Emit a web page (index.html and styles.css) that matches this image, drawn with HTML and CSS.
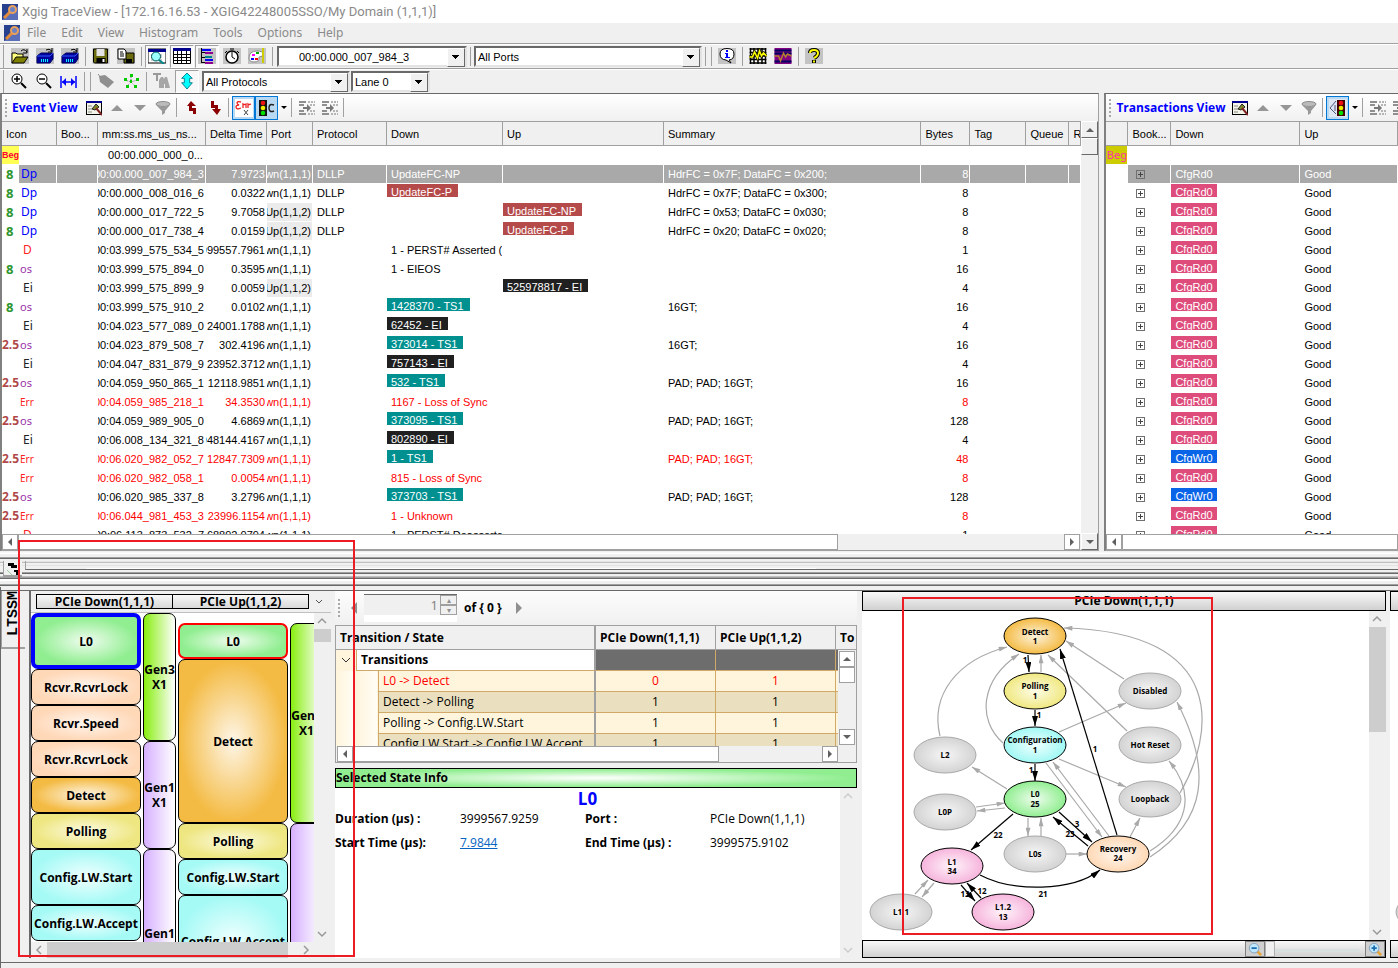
FILE: index.html
```html
<!DOCTYPE html>
<html lang="en">
<head>
  <meta charset="UTF-8">
  <meta name="viewport" content="width=device-width, initial-scale=1.0">
  <title>Xgig TraceView</title>
  <link rel="stylesheet" href="styles.css">
</head>
<body>
  <!-- Icon sprites -->
  <svg class="sprites" aria-hidden="true">
    <symbol id="i-app" viewBox="0 0 16 16"><rect width="16" height="16" fill="#27418f"/><path d="M0 16L16 2V16Z" fill="#5a6fb8"/><path d="M2 14L8 8" stroke="#e08a3c" stroke-width="3"/><circle cx="10.500" cy="5.500" r="3.500" fill="#6c82c4" stroke="#e8a05a" stroke-width="2"/></symbol>
    <symbol id="i-open" viewBox="0 0 18 16"><rect width="18" height="16" fill="#c3c3c3"/><path d="M1 15V5h4l1 1h6v3" fill="#ffff80" stroke="#000"/><path d="M1 15l4-6h12l-4 6Z" fill="#808000" stroke="#000"/><path d="M10 3q3-3 6 1M16 1v4h-4" fill="none" stroke="#000"/></symbol>
    <symbol id="i-dev" viewBox="0 0 18 16"><rect width="18" height="16" fill="#c3c3c3"/><path d="M1 8l4-3h12v6l-3 4H1Z" fill="#00009c" stroke="#000060"/><path d="M1 8h13l3-3" fill="none" stroke="#2a5aff"/><path d="M5 12.500h8" stroke="#0ff" stroke-width="3" stroke-dasharray="1 1"/><path d="M10 2q3-2 6 1M16 0v4h-4" fill="none" stroke="#000"/></symbol>
    <symbol id="i-save" viewBox="0 0 17 16"><rect width="17" height="16" fill="#c3c3c3"/><path d="M1 1h14v14H2l-1-1Z" fill="#6b6b10" stroke="#000"/><path d="M4 1h8v7H4Z" fill="#e4e4e4"/><path d="M4 10h9v5H4Z" fill="#000"/><path d="M10 11h2v3h-2Z" fill="#fff"/></symbol>
    <symbol id="i-saveas" viewBox="0 0 18 16"><rect width="18" height="16" fill="#c3c3c3"/><path d="M7 5h10v10H7Z" fill="#6b6b10" stroke="#000"/><path d="M9 11h6v4H9Z" fill="#000"/><path d="M1 1h6l2 2v8H1Z" fill="#fff" stroke="#000"/><path d="M3 4h3M3 6h4M3 8h4" stroke="#000"/></symbol>
    <symbol id="i-find" viewBox="0 0 18 16"><path d="M0 1h18v14H0Z" fill="#fff" stroke="#000"/><path d="M0 1h18v3H0Z" fill="#000090"/><path d="M3 7h12M3 9h12M3 12h12" stroke="#999" stroke-dasharray="2 1"/><circle cx="8" cy="8.500" r="4.500" fill="#9ff" stroke="#055"/><path d="M11 12l5 4" stroke="#088" stroke-width="2"/></symbol>
    <symbol id="i-grid" viewBox="0 0 18 16"><path d="M.5.5h17v15H.5Z" fill="#fff" stroke="#000"/><path d="M0 0h18v3H0Z" fill="#00008b"/><path d="M0 6.500h18M0 9.500h18M0 12.500h18M4.500 3v13M8.500 3v13M13.500 3v13" stroke="#000"/></symbol>
    <symbol id="i-tree" viewBox="0 0 18 16"><rect width="18" height="16" fill="#c3c3c3"/><path d="M3.500 0v15M4 4.500h3M4 9.500h3M4 14.500h3" stroke="#000" fill="none"/><path d="M4 2h9M7 12h8" stroke="#00f" stroke-width="2"/><path d="M7 5h8M7 15h8" stroke="#900090" stroke-width="2"/><path d="M7 9h7" stroke="#088" stroke-width="2"/></symbol>
    <symbol id="i-clock" viewBox="0 0 18 16"><rect width="18" height="16" fill="#c3c3c3"/><circle cx="9" cy="9" r="6" fill="#fff" stroke="#000" stroke-width="1.500"/><path d="M9 9V4M9 9l3 2M7 1h4M4 3L2 5M14 3l2 2" stroke="#000"/></symbol>
    <symbol id="i-paint" viewBox="0 0 18 16"><rect width="18" height="16" fill="#c3c3c3"/><path d="M1 10q0-7 8-7 6 0 6 3t-4 3q1 5-5 5-5 0-5-4" fill="#fff" stroke="#888"/><path d="M4 6h3v2H4Z" fill="#f0f"/><path d="M3 10h3v2H3Z" fill="#00f"/><path d="M8 4h3v2H8Z" fill="#0a0"/><path d="M7 10h3v2H7Z" fill="#f00"/><path d="M15 0v15" stroke="#cc0" stroke-width="2"/></symbol>
    <symbol id="i-info" viewBox="0 0 18 16"><rect width="18" height="16" fill="#c3c3c3"/><path d="M9 .5q7 0 7 5.500t-5 6l2 3-5-3Q2 11.500 2 6T9 .5" fill="#fff" stroke="#000"/><path d="M8 2h2v2H8ZM7 5h3v4h2v1H7V9h1V6H7Z" fill="#00f"/></symbol>
    <symbol id="i-wave" viewBox="0 0 17 16"><rect width="17" height="16" fill="#fff"/><path d="M0 1h17M0 4.500h17M0 8h17M0 11.500h17M0 15h17M1 0v16M4.500 0v16M8.500 0v16M12.500 0v16M16 0v16" stroke="#000" stroke-width="1.500"/><path d="M0 9h3l2-5 3 6 2-7 2 5 2-3 3 3" fill="none" stroke="#220" stroke-width="3"/><path d="M0 9h3l2-5 3 6 2-7 2 5 2-3 3 3" fill="none" stroke="#ff0" stroke-width="1.500"/></symbol>
    <symbol id="i-wave2" viewBox="0 0 17 16"><rect width="17" height="16" fill="#800080"/><path d="M0 2.500h17M0 5.500h17M0 13.500h17" stroke="#000060" stroke-width="2"/><path d="M0 8h4l2 5 3-8 2 4 2-3 4 2" fill="none" stroke="#b08030" stroke-width="1.500"/></symbol>
    <symbol id="i-help" viewBox="0 0 18 16"><rect width="18" height="16" fill="#c3c3c3"/><path d="M5 5q0-3 4-3t4 3-4 5M9 12v3" fill="none" stroke="#000" stroke-width="4"/><path d="M5 5q0-3 4-3t4 3-4 5M9 12.500v2" fill="none" stroke="#ff0" stroke-width="2"/></symbol>
    <symbol id="i-zin" viewBox="0 0 18 16"><circle cx="7" cy="6" r="5" fill="#fff" stroke="#000"/><path d="M4 6h6M7 3v6" stroke="#000" stroke-width="1.500"/><path d="M11 10l5 5" stroke="#000" stroke-width="2"/></symbol>
    <symbol id="i-zout" viewBox="0 0 18 16"><circle cx="7" cy="6" r="5" fill="#fff" stroke="#000"/><path d="M4 6h6" stroke="#000" stroke-width="1.500"/><path d="M11 10l5 5" stroke="#000" stroke-width="2"/></symbol>
    <symbol id="i-fit" viewBox="0 0 18 16"><path d="M1 3v12M16 3v12M2 9h13" stroke="#00f" stroke-width="1.500"/><path d="M2 9l4-4v8ZM15 9l-4-4v8Z" fill="#00f"/></symbol>
    <symbol id="i-tag" viewBox="0 0 18 16"><path d="M2 3l6-1 9 7-6 6-8-6Z" fill="#8f8f8f"/><path d="M1 1l4 5" stroke="#8f8f8f"/></symbol>
    <symbol id="i-star" viewBox="0 0 18 16"><path d="M9 2v6M3 7l6 2 6-2M5 13l4-4 4 4" stroke="#777" stroke-dasharray="1 1" fill="none"/><path d="M8 1h3v3H8ZM2 5h3v3H2ZM14 5h3v3h-3ZM8 7h2v3H8ZM4 12h3v3H4ZM12 12h3v3h-3Z" fill="#0c0"/></symbol>
    <symbol id="i-bino" viewBox="0 0 18 16"><path d="M0 1h8M4 1v7" stroke="#999" stroke-width="2"/><path d="M6 7l2-3h2l1 2 1-2h2l3 11h-5v-4h-1v4H6Z" fill="#a6a6a6"/></symbol>
    <symbol id="i-updn" viewBox="0 0 18 18"><path d="M9 0l6 6h-3v5h3l-6 7-6-7h3V6H3Z" fill="#0ff" stroke="#078"/></symbol>
    <symbol id="i-prop" viewBox="0 0 16 16"><rect x=".5" y="1.500" width="15" height="13" fill="#f4f4e8" stroke="#000"/><path d="M0 1h16v2H0Z" fill="#000090"/><path d="M2 6h4M2 9h4M2 12h4" stroke="#888"/><path d="M6 9l4-5 3 3-4 3Z" fill="#7c8a2c" stroke="#222"/><path d="M10 8l6 7" stroke="#802020" stroke-width="2"/></symbol>
    <symbol id="i-up" viewBox="0 0 16 16"><path d="M2 11h12L8 5Z" fill="#969696"/></symbol>
    <symbol id="i-down" viewBox="0 0 16 16"><path d="M2 5h12L8 11Z" fill="#969696"/></symbol>
    <symbol id="i-funnel" viewBox="0 0 16 16"><ellipse cx="8" cy="4" rx="7" ry="2.500" fill="#bbb" stroke="#8c8c8c"/><path d="M1 5l6 6v4l3-2v-2l5-6q-7 3-14 0" fill="#999"/></symbol>
    <symbol id="i-prev" viewBox="0 0 16 16"><path d="M3 6l4-5 5 5H8v2h4v6H9v-3H5V6Z" fill="#8b0000"/></symbol>
    <symbol id="i-next" viewBox="0 0 16 16"><path d="M4 1h3v4h4v4h3l-4 6-5-6h3V8H4Z" fill="#8b0000"/></symbol>
    <symbol id="i-err" viewBox="0 0 18 18"><rect width="18" height="18" fill="#fff"/><path d="M6 3q-4-1-4 1 0 1 2 2-3 0-3 2 0 3 5 1M8 9V5q1 1 3 0v4M13 9V5q1 1 3 0" fill="none" stroke="#e22" stroke-width="1.300"/><path d="M9 11l4 5M13 11l-4 5" stroke="#444"/></symbol>
    <symbol id="i-lamp" viewBox="0 0 18 18"><path d="M1 1h8v16H1Z" fill="#111"/><circle cx="5" cy="4" r="2.300" fill="#e11"/><circle cx="5" cy="9" r="2.300" fill="#ee0"/><circle cx="5" cy="14" r="2.300" fill="#0d0"/><path d="M16 6q-5-2-5 3t5 3" fill="none" stroke="#222" stroke-width="1.500"/></symbol>
    <symbol id="i-lamp2" viewBox="0 0 18 18"><rect width="18" height="18" fill="#dde8f4"/><path d="M8 1h8v16H8Z" fill="#400"/><circle cx="12" cy="4" r="2.300" fill="#e11"/><circle cx="12" cy="9" r="2.300" fill="#ee0"/><circle cx="12" cy="14" r="2.300" fill="#0d0"/><path d="M7 2L1 9l6 6M6 6v6" fill="none" stroke="#557"/></symbol>
    <symbol id="i-merge" viewBox="0 0 16 16"><path d="M0 2h7M0 5h5M0 11h5M0 14h7" stroke="#8f8f8f" stroke-width="2"/><path d="M9 2h7M11 5h5M11 11h5M9 14h7" stroke="#b5b5b5" stroke-width="2" stroke-dasharray="2 1"/><path d="M4 8h5" stroke="#777" stroke-width="2"/><path d="M8 4l4 4-4 4Z" fill="#777"/></symbol>
    <symbol id="i-lens-out" viewBox="0 0 18 16"><path d="M11 10l5 5" stroke="#e8a53a" stroke-width="3"/><circle cx="8" cy="7" r="5.500" fill="#bfe6fa" stroke="#7c9cb8"/><path d="M5 7h6" stroke="#1a6fb0" stroke-width="2"/></symbol>
    <symbol id="i-lens-in" viewBox="0 0 18 16"><path d="M11 10l5 5" stroke="#e8a53a" stroke-width="3"/><circle cx="8" cy="7" r="5.500" fill="#bfe6fa" stroke="#7c9cb8"/><path d="M5 7h6M8 4v6" stroke="#1a6fb0" stroke-width="2"/></symbol>
  </svg>

  <header class="title-bar"><svg class="app-icon"><use href="#i-app"/></svg>Xgig TraceView - [172.16.16.53 - XGIG42248005SSO/My Domain (1,1,1)]</header>
  <nav class="menu-bar">
    <svg class="app-icon"><use href="#i-app"/></svg>
    <a href="#">File</a><a href="#">Edit</a><a href="#">View</a><a href="#">Histogram</a><a href="#">Tools</a><a href="#">Options</a><a href="#">Help</a>
  </nav>

  <div class="toolbar first">
    <button aria-label="Open"><svg><use href="#i-open"/></svg></button>
    <button aria-label="Connect"><svg><use href="#i-dev"/></svg></button>
    <button aria-label="Reconnect"><svg><use href="#i-dev"/></svg></button>
    <i class="sep"></i>
    <button aria-label="Save"><svg><use href="#i-save"/></svg></button>
    <button aria-label="Save as"><svg><use href="#i-saveas"/></svg></button>
    <i class="sep"></i>
    <button class="on" aria-label="Find"><svg><use href="#i-find"/></svg></button>
    <button class="on" aria-label="Spreadsheet"><svg><use href="#i-grid"/></svg></button>
    <button class="on" aria-label="Tree"><svg><use href="#i-tree"/></svg></button>
    <button aria-label="Timer"><svg><use href="#i-clock"/></svg></button>
    <button aria-label="Colors"><svg><use href="#i-paint"/></svg></button>
    <i class="sep"></i>
    <div class="combo time"><select aria-label="Time"><option>00:00.000_007_984_3</option></select></div>
    <i class="sep"></i>
    <div class="combo ports"><select aria-label="Ports"><option>All Ports</option></select></div>
    <i class="sep"></i><i class="sep"></i>
    <button aria-label="Info"><svg><use href="#i-info"/></svg></button>
    <i class="sep"></i>
    <button aria-label="Chart"><svg><use href="#i-wave"/></svg></button>
    <button aria-label="Signal"><svg><use href="#i-wave2"/></svg></button>
    <i class="sep"></i>
    <button aria-label="Help"><svg><use href="#i-help"/></svg></button>
  </div>
  <div class="toolbar">
    <button aria-label="Zoom in"><svg><use href="#i-zin"/></svg></button>
    <button aria-label="Zoom out"><svg><use href="#i-zout"/></svg></button>
    <button aria-label="Fit"><svg><use href="#i-fit"/></svg></button>
    <i class="sep"></i><i class="sep"></i>
    <button aria-label="Tag"><svg><use href="#i-tag"/></svg></button>
    <button aria-label="Topology"><svg><use href="#i-star"/></svg></button>
    <i class="sep"></i>
    <button aria-label="Search"><svg><use href="#i-bino"/></svg></button>
    <button class="on" aria-label="Sync"><svg><use href="#i-updn"/></svg></button>
    <div class="combo protocols"><select aria-label="Protocols"><option>All Protocols</option></select></div>
    <div class="combo lane"><select aria-label="Lane"><option>Lane 0</option></select></div>
  </div>

  <main class="views">
    <!-- Event View -->
    <section class="view events">
      <div class="view-head">
        <i class="grip"></i><h2>Event View</h2>
        <button aria-label="Properties"><svg><use href="#i-prop"/></svg></button>
        <button aria-label="Up"><svg><use href="#i-up"/></svg></button>
        <button aria-label="Down"><svg><use href="#i-down"/></svg></button>
        <button aria-label="Filter"><svg><use href="#i-funnel"/></svg></button>
        <i class="sep"></i>
        <button aria-label="Previous"><svg><use href="#i-prev"/></svg></button>
        <button aria-label="Next"><svg><use href="#i-next"/></svg></button>
        <i class="sep"></i>
        <button class="hot" aria-label="Errors"><svg><use href="#i-err"/></svg></button>
        <button class="hot" aria-label="Colors"><svg><use href="#i-lamp"/></svg></button>
        <button class="more" aria-label="More"></button>
        <i class="sep"></i>
        <button aria-label="Expand"><svg><use href="#i-merge"/></svg></button>
        <button aria-label="Collapse"><svg><use href="#i-merge"/></svg></button>
        <i class="sep"></i>
      </div>
      <div class="view-body">
        <div class="clip">
          <table class="grid">
            <colgroup><col class="w55"><col class="w41"><col class="w108"><col class="w61"><col class="w46"><col class="w74"><col class="w116"><col class="w161"><col><col class="w49"><col class="w56"><col class="w43"><col class="w12"></colgroup>
            <thead><tr><th>Icon</th><th>Boo...</th><th>mm:ss.ms_us_ns...</th><th>Delta Time</th><th>Port</th><th>Protocol</th><th>Down</th><th>Up</th><th>Summary</th><th>Bytes</th><th>Tag</th><th>Queue</th><th>R</th></tr></thead>
            <tbody id="event-rows"></tbody>
          </table>
        </div>
        <div class="sb v"><button class="a-up" aria-label="Scroll up"></button><div class="thumb"></div><button class="a-down" aria-label="Scroll down"></button></div>
      </div>
      <div class="sb h"><button class="a-left" aria-label="Scroll left"></button><div class="thumb"></div><button class="a-right" aria-label="Scroll right"></button></div>
    </section>

    <!-- Transactions View -->
    <section class="view transactions">
      <div class="view-head">
        <i class="grip"></i><h2>Transactions View</h2>
        <button aria-label="Properties"><svg><use href="#i-prop"/></svg></button>
        <button aria-label="Up"><svg><use href="#i-up"/></svg></button>
        <button aria-label="Down"><svg><use href="#i-down"/></svg></button>
        <button aria-label="Filter"><svg><use href="#i-funnel"/></svg></button>
        <i class="sep"></i>
        <button class="hot" aria-label="Colors"><svg><use href="#i-lamp2"/></svg></button>
        <button class="more" aria-label="More"></button>
        <i class="sep"></i>
        <button aria-label="Expand"><svg><use href="#i-merge"/></svg></button>
        <button aria-label="Collapse"><svg><use href="#i-merge"/></svg></button>
      </div>
      <div class="view-body">
        <div class="clip">
          <table class="grid">
            <colgroup><col class="w22"><col class="w43"><col class="w129"><col></colgroup>
            <thead><tr><th></th><th>Book...</th><th>Down</th><th>Up</th></tr></thead>
            <tbody id="transaction-rows"></tbody>
          </table>
        </div>
      </div>
      <div class="sb h"><button class="a-left" aria-label="Scroll left"></button><div class="thumb"></div></div>
    </section>
  </main>

  <!-- Collapsed docks between the views and the LTSSM dock -->
  <div class="folded">
    <div class="folded-tab"><svg viewBox="0 0 18 15"><path d="M4 2h6v2h3v3H7V5H4ZM10 9h4v5h-2v-3h-2Z" fill="#000"/><path d="M3 9l5 5" stroke="#9c9"/></svg></div>
    <div class="folded-line"></div>
  </div>

  <section class="dock">
    <div class="side-tab">LTSSM</div>

    <!-- State timeline -->
    <div class="timeline">
      <div class="timeline-head"><span>PCIe Down(1,1,1)</span><span>PCIe Up(1,1,2)</span><button class="chev" aria-label="Ports"><svg viewBox="0 0 10 10"><path d="M2 4l3 3 3-3"/></svg></button></div>
      <div class="timeline-body">
        <div class="lanes">
          <div class="lane states">
            <div class="st l0 s56 current">L0</div>
            <div class="st rcvr">Rcvr.RcvrLock</div>
            <div class="st rcvr">Rcvr.Speed</div>
            <div class="st rcvr">Rcvr.RcvrLock</div>
            <div class="st detect">Detect</div>
            <div class="st polling">Polling</div>
            <div class="st config s56">Config.LW.Start</div>
            <div class="st config">Config.LW.Accept</div>
          </div>
          <div class="lane speeds">
            <div class="st gen3 s128">Gen3 X1</div>
            <div class="st gen1 s108">Gen1 X1</div>
            <div class="st gen1 s184">Gen1 X1</div>
          </div>
          <div class="lane states late">
            <div class="st l0 mate">L0</div>
            <div class="st detect s164">Detect</div>
            <div class="st polling">Polling</div>
            <div class="st config">Config.LW.Start</div>
            <div class="st config s92">Config.LW.Accept</div>
          </div>
          <div class="lane speeds late">
            <div class="st gen3 s200">Gen3 X1</div>
            <div class="st gen1 s384"></div>
          </div>
        </div>
        <div class="flat v"><svg viewBox="0 0 16 16"><path d="M4 10l4-4 4 4"/></svg><i class="short"></i><svg class="last" viewBox="0 0 16 16"><path d="M4 6l4 4 4-4"/></svg></div>
      </div>
      <div class="flat h"><svg viewBox="0 0 16 16"><path d="M10 4L6 8l4 4"/></svg><i></i><svg viewBox="0 0 16 16"><path d="M6 4l4 4-4 4"/></svg></div>
    </div>

    <!-- Transition counts and the selected state -->
    <div class="detail">
      <div class="pager">
        <i class="grip"></i>
        <button class="p-prev" aria-label="Previous"></button>
        <div class="spin"><input type="text" value="1" aria-label="Page" disabled><span><button aria-label="More">▴</button><button aria-label="Less">▾</button></span></div>
        <b>of { 0 }</b>
        <button class="p-next" aria-label="Next"></button>
      </div>
      <div class="counts">
        <div class="counts-clip">
          <table>
            <colgroup><col class="w20"><col class="w22"><col><col class="w120"><col class="w120"><col class="w20"></colgroup>
            <thead><tr><th colspan="3">Transition / State</th><th>PCIe Down(1,1,1)</th><th>PCIe Up(1,1,2)</th><th>To</th></tr></thead>
            <tbody>
              <tr class="group"><td class="tree"><svg viewBox="0 0 10 10"><path d="M1 3l4 4 4-4"/></svg></td><td colspan="2">Transitions</td><td></td><td></td><td></td></tr>
              <tr class="red"><td class="tree"></td><td class="tree"></td><td>L0 -&gt; Detect</td><td>0</td><td>1</td><td></td></tr>
              <tr class="alt"><td class="tree"></td><td class="tree"></td><td>Detect -&gt; Polling</td><td>1</td><td>1</td><td></td></tr>
              <tr><td class="tree"></td><td class="tree"></td><td>Polling -&gt; Config.LW.Start</td><td>1</td><td>1</td><td></td></tr>
              <tr class="alt"><td class="tree"></td><td class="tree"></td><td>Config.LW.Start -&gt; Config.LW.Accept</td><td>1</td><td>1</td><td></td></tr>
            </tbody>
          </table>
          <div class="sb v"><button class="a-up" aria-label="Scroll up"></button><div class="thumb"></div><button class="a-down" aria-label="Scroll down"></button></div>
        </div>
        <div class="sb h"><button class="a-left" aria-label="Scroll left"></button><div class="thumb"></div><button class="a-right" aria-label="Scroll right"></button></div>
      </div>
      <h3 class="info-head">Selected State Info</h3>
      <div class="info">
        <div class="info-main">
          <h4>L0</h4>
          <dl>
            <dt>Duration (µs) :</dt><dd>3999567.9259</dd><dt>Port :</dt><dd>PCIe Down(1,1,1)</dd>
            <dt>Start Time (µs):</dt><dd><a href="#">7.9844</a></dd><dt>End Time (µs) :</dt><dd>3999575.9102</dd>
          </dl>
        </div>
        <div class="flat v idle"><svg viewBox="0 0 16 16"><path d="M4 10l4-4 4 4"/></svg><svg class="last" viewBox="0 0 16 16"><path d="M4 6l4 4 4-4"/></svg></div>
      </div>
    </div>

    <!-- State diagram -->
    <div class="diagram">
      <div class="bar">PCIe Down(1,1,1)</div>
      <div class="canvas">
        <svg class="graph" viewBox="0 21 506 328">
          <defs>
            <marker id="ag" viewBox="0 0 10 6" refX="10" refY="3" markerWidth="9" markerHeight="5" markerUnits="userSpaceOnUse" orient="auto"><path d="M0 0L10 3 0 6Z" fill="#a9a9a9"/></marker>
            <marker id="ab" viewBox="0 0 10 6" refX="10" refY="3" markerWidth="10" markerHeight="6" markerUnits="userSpaceOnUse" orient="auto"><path d="M0 0L10 3 0 6Z"/></marker>
            <radialGradient id="g-grey"><stop offset="0" stop-color="#f6f6f6"/><stop offset="1" stop-color="#d3d3d3"/></radialGradient>
            <radialGradient id="g-detect"><stop offset="0" stop-color="#fdf3df"/><stop offset="1" stop-color="#f4bb44"/></radialGradient>
            <radialGradient id="g-polling"><stop offset="0" stop-color="#fdfce8"/><stop offset="1" stop-color="#f0e880"/></radialGradient>
            <radialGradient id="g-config"><stop offset="0" stop-color="#f0fffe"/><stop offset="1" stop-color="#a0f8f4"/></radialGradient>
            <radialGradient id="g-l0"><stop offset="0" stop-color="#eefcee"/><stop offset="1" stop-color="#90ee90"/></radialGradient>
            <radialGradient id="g-l1"><stop offset="0" stop-color="#fff4fa"/><stop offset="1" stop-color="#f6b4dc"/></radialGradient>
            <radialGradient id="g-rec"><stop offset="0" stop-color="#fff8f2"/><stop offset="1" stop-color="#ffd8b4"/></radialGradient>
          </defs>
          <g class="edge">
            <path d="M78 146C68 105 95 70 145 57"/><path d="M141 153C115 130 118 90 157 64"/><path d="M179 82V65"/>
            <path d="M265 141L186 65"/><path d="M262 89L204 51"/><path d="M318 203C352 145 368 42 202 38"/>
            <path d="M197 142L264 113"/><path d="M197 169L264 197"/><path d="M184 173L240 247"/><path d="M247 246L191 172"/>
            <path d="M145 199L110 177"/><path d="M143 218L115 221"/><path d="M114 217L143 213"/>
            <path d="M166 228V246"/><path d="M179 246V228"/><path d="M204 264H225"/><path d="M268 247L278 228"/>
            <path d="M288 261C325 238 335 205 307 171"/><path d="M288 267C345 230 350 180 315 112"/>
            <path d="M53 304L66 290"/><path d="M72 293L60 307"/>
          </g>
          <g class="edge hit">
            <path d="M166 65L167 82"/><path d="M173 120V136"/><path d="M173 174V191"/><path d="M151 224L109 260"/>
            <path d="M197 222L230 252"/><path d="M226 256L191 227"/><path d="M255 245L198 59"/>
            <path d="M118 285C150 302 210 302 238 280"/><path d="M99 295L113 311"/><path d="M119 308L105 293"/>
          </g>
          <g class="node idle" fill="url(#g-grey)">
            <ellipse cx="83" cy="165" rx="31" ry="18"/><ellipse cx="83" cy="222" rx="31" ry="18"/><ellipse cx="173" cy="264" rx="31" ry="18"/>
            <ellipse cx="39" cy="322" rx="31" ry="18"/><ellipse cx="288" cy="101" rx="31" ry="18"/><ellipse cx="288" cy="155" rx="31" ry="18"/><ellipse cx="288" cy="209" rx="31" ry="18"/>
          </g>
          <g class="node">
            <ellipse cx="173" cy="46" rx="31" ry="18" fill="url(#g-detect)"/><ellipse cx="173" cy="101" rx="31" ry="18" fill="url(#g-polling)"/>
            <ellipse cx="173" cy="155" rx="31" ry="18" fill="url(#g-config)"/><ellipse cx="173" cy="209" rx="31" ry="18" fill="url(#g-l0)"/>
            <ellipse cx="256" cy="264" rx="31" ry="18" fill="url(#g-rec)"/><ellipse cx="90" cy="276" rx="31" ry="18" fill="url(#g-l1)"/><ellipse cx="141" cy="322" rx="31" ry="18" fill="url(#g-l1)"/>
          </g>
          <g class="names">
            <text x="173" y="45">Detect</text><text x="173" y="54">1</text>
            <text x="173" y="99">Polling</text><text x="173" y="109">1</text>
            <text x="173" y="153">Configuration</text><text x="173" y="163">1</text>
            <text x="173" y="207">L0</text><text x="173" y="217">25</text>
            <text x="256" y="262">Recovery</text><text x="256" y="271">24</text>
            <text x="90" y="275">L1</text><text x="90" y="284">34</text>
            <text x="141" y="320">L1.2</text><text x="141" y="330">13</text>
            <text x="83" y="168">L2</text><text x="83" y="225">L0P</text><text x="173" y="267">L0s</text><text x="39" y="325">L1.1</text>
            <text x="288" y="104">Disabled</text><text x="288" y="158">Hot Reset</text><text x="288" y="212">Loopback</text>
            <text x="163" y="73">1</text><text x="177" y="128">1</text><text x="169" y="183">1</text><text x="233" y="162">1</text>
            <text x="215" y="237">3</text><text x="208" y="247">23</text><text x="136" y="248">22</text><text x="181" y="307">21</text>
            <text x="103" y="307">13</text><text x="120" y="304">12</text>
          </g>
        </svg>
        <div class="flat v"><svg viewBox="0 0 16 16"><path d="M4 10l4-4 4 4"/></svg><i class="long"></i><svg class="last" viewBox="0 0 16 16"><path d="M4 6l4 4 4-4"/></svg></div>
      </div>
      <div class="bar zoom">
        <button aria-label="Zoom out"><svg><use href="#i-lens-out"/></svg></button>
        <input type="range" min="0" max="100" value="0" aria-label="Zoom">
        <button aria-label="Zoom in"><svg><use href="#i-lens-in"/></svg></button>
      </div>
      <div class="mark"></div>
    </div>
    <div class="diagram next">
      <div class="bar"></div>
      <div class="canvas"><svg class="graph" viewBox="0 21 506 328"><g class="node idle" fill="url(#g-grey)"><ellipse cx="37" cy="322" rx="31" ry="18"/></g></svg></div>
      <div class="bar foot"></div>
    </div>
    <div class="mark wide"></div>
  </section>

  <script src="script.js"></script>
</body>
</html>
```
FILE: styles.css
```css
* { box-sizing: border-box; }
body {
  margin: 0;
  height: 100vh;
  display: flex;
  flex-direction: column;
  overflow: hidden;
  background: #f0f0f0;
  color: #000;
  font: 11px/18px "Liberation Sans", Arial, sans-serif;
}
button { border: 0; padding: 0; background: none; font: inherit; flex: none; }
h2, h3, h4, dl, dd { margin: 0; }
table { border-collapse: separate; border-spacing: 0; table-layout: fixed; width: 100%; }
.sprites { display: none; }

/* Title and menu */
.title-bar {
  flex: none;
  height: 23px;
  display: flex;
  align-items: center;
  gap: 4px;
  padding-left: 2px;
  background: #fff;
  color: #8a8a8a;
  font: 13px/20px Roboto, sans-serif;
}
.app-icon { width: 16px; height: 16px; flex: none; }
.menu-bar {
  flex: none;
  height: 20px;
  display: flex;
  align-items: center;
  gap: 15px;
  padding-left: 4px;
  font: 12px/18px "Noto Sans", sans-serif;
}
.menu-bar .app-icon { margin-right: -8px; }
.menu-bar a { color: #8a8a8a; text-decoration: none; }

/* Toolbars */
.toolbar {
  flex: none;
  height: 25px;
  display: flex;
  align-items: center;
  gap: 1px;
  padding-left: 7px;
  border-top: 1px solid #a0a0a0;
  box-shadow: inset 0 1px #fff, inset 3px 0 #f0f0f0, inset 4px 0 #a0a0a0;
}
.toolbar.first { padding-left: 8px; }
.toolbar button {
  width: 24px;
  height: 23px;
  display: flex;
  align-items: center;
  justify-content: center;
}
.toolbar button svg { width: 18px; height: 16px; }
.toolbar button.on { background: #f8f8f8; border: 1px solid; border-color: #a0a0a0 #fff #fff #a0a0a0; }
.sep { flex: none; width: 5px; height: 19px; background: linear-gradient(#a0a0a0, #a0a0a0) 2px 0 / 1px 100% no-repeat; }
.combo {
  position: relative;
  height: 21px;
  background: #fff;
  border: 2px solid;
  border-color: #696969 #e3e3e3 #e3e3e3 #696969;
}
.combo select {
  appearance: none;
  width: 100%;
  height: 17px;
  padding: 0 18px 0 2px;
  border: 0;
  background: none;
  color: #000;
  font: inherit;
}
.combo::after {
  content: "";
  position: absolute;
  top: 0;
  right: 0;
  width: 16px;
  height: 17px;
  border: 1px solid;
  border-color: #fff #696969 #696969 #fff;
  background: linear-gradient(#000, #000) 4px 6px / 7px 1px no-repeat, linear-gradient(#000, #000) 5px 7px / 5px 1px no-repeat, linear-gradient(#000, #000) 6px 8px / 3px 1px no-repeat, linear-gradient(#000, #000) 7px 9px / 1px 1px no-repeat, #f0f0f0;
  pointer-events: none;
}
.combo.time { width: 190px; margin-left: 1px; }
.combo.time select { padding-left: 20px; }
.combo.ports { width: 228px; }
.combo.protocols { width: 148px; margin-left: 2px; }
.combo.lane { width: 79px; }

/* Views */
.views { flex: 1 1 0; min-height: 0; display: flex; gap: 5px; }
.view {
  display: flex;
  flex-direction: column;
  min-width: 0;
  border-top: 1px solid #696969;
  border-left: 2px solid #808080;
  border-bottom: 1px solid #a0a0a0;
}
.events { flex: 1; border-right: 1px solid #a0a0a0; }
.transactions { flex: 0 0 21%; }
.view-head {
  flex: none;
  height: 27px;
  display: flex;
  align-items: center;
  overflow: hidden;
  background: linear-gradient(#fff, #f0f0f0);
}
.view-head h2 {
  flex: none;
  width: 70px;
  color: #00f;
  font: bold 12px/20px "Open Sans", sans-serif;
  white-space: nowrap;
}
.transactions .view-head h2 { width: 112px; }
.grip { flex: none; width: 10px; height: 18px; background: repeating-linear-gradient(#a8a8a8 0 2px, transparent 2px 4px) 3px 0 / 2px 100% no-repeat; }
.view-head button { width: 23px; height: 24px; display: flex; align-items: center; justify-content: center; }
.view-head button svg { width: 16px; height: 16px; }
.view-head .sep { width: 6px; }
.view-head .hot { background: #b9d9f3; border: 1px solid #0078d7; }
.view-head .hot svg { width: 18px; height: 18px; }
.view-head .more { width: 11px; }
.more::after { content: ""; border: 3px solid transparent; border-top-color: #000; border-bottom: 0; }
.view-body { flex: 1 1 0; min-height: 0; display: flex; background: #fff; }
.clip { flex: 1; min-width: 0; overflow: hidden; }

.w12 { width: 12px; } .w20 { width: 20px; } .w22 { width: 22px; } .w41 { width: 41px; }
.w43 { width: 43px; } .w46 { width: 46px; } .w49 { width: 49px; } .w55 { width: 55px; }
.w56 { width: 56px; } .w61 { width: 61px; } .w74 { width: 74px; } .w108 { width: 108px; }
.w116 { width: 116px; } .w120 { width: 120px; } .w129 { width: 129px; } .w161 { width: 161px; }

.grid th {
  height: 25px;
  padding: 0 0 0 4px;
  border: 1px solid #a0a0a0;
  border-left: 0;
  background: #f0f0f0;
  font-weight: normal;
  text-align: left;
  white-space: nowrap;
  overflow: hidden;
}
.grid td {
  height: 19px;
  padding: 0 0 0 4px;
  border-right: 1px solid #fff;
  border-bottom: 1px solid #fff;
  background-clip: padding-box;
  line-height: 18px;
  white-space: nowrap;
  overflow: hidden;
}
.grid .error { color: #f00; }
.grid .selected td { background-color: #a9a9a9; color: #fff; }
.grid .selected .blank { background-color: #fff; }
.grid .icons { padding: 0; }
.grid .end { padding: 0; }
.end span { display: flex; justify-content: flex-end; overflow: hidden; padding-right: 1px; }
.port.up { background-color: #ebebeb; }
.icons b { float: left; width: 17px; height: 18px; font: bold 12px/18px "Open Sans", sans-serif; background: #fff; color: #b04848; }
.icons b.g8 { padding-left: 4px; font-size: 13px; color: #2e962e; }
.icons i { font: 12px/17px "Noto Sans", sans-serif; padding-left: 2px; }
.icons .Dp { color: #00f; }
.icons .Ei { color: #222; padding-left: 4px; }
.icons .D { color: #f22; padding-left: 4px; }
.icons .os { color: #93a; font-size: 11px; padding-left: 1px; }
.icons .Err { color: #f22; font-size: 10px; padding-left: 1px; }
.grid .beg { padding: 0; background-color: #cccc00; color: #f3a; font: 11px/18px "Noto Sans", sans-serif; text-align: center; }
.beg-tag { display: block; width: 17px; background: #ffff54; color: #f03; font-weight: bold; font-size: 9px; }
.badge {
  display: block;
  width: fit-content;
  height: 13px;
  margin: -5px 0 0 -4px;
  padding: 0 6px 0 4px;
  line-height: 17px;
  overflow: hidden;
  color: #fff;
}
.badge.dllp { background: #b54a4a; }
.badge.ts { background: #009090; }
.badge.ei { background: #202020; }
.badge.rd { background: #de4c7c; padding-right: 4px; }
.badge.wr { background: #0a64e8; padding-right: 4px; }
.plus { display: block; width: 9px; height: 9px; margin-left: 4px; border: 1px solid #707070; background: linear-gradient(#444, #444) center / 5px 1px no-repeat, linear-gradient(#444, #444) center / 1px 5px no-repeat; }

/* Scroll bars with boxed arrows */
.sb { flex: none; display: flex; background: #f0f0f0; }
.sb.h { height: 16px; }
.sb.v { width: 17px; flex-direction: column; }
.sb button, .sb .thumb { width: 16px; height: 16px; background: #fff; border: 1px solid #a0a0a0; }
.sb button { display: flex; align-items: center; justify-content: center; }
.sb button::after { content: ""; border: 4px solid transparent; }
.a-up::after { border-top: 0 !important; border-bottom-color: #606060 !important; }
.a-down::after { border-bottom: 0 !important; border-top-color: #606060 !important; }
.a-left::after { border-left: 0 !important; border-right-color: #606060 !important; }
.a-right::after { border-right: 0 !important; border-left-color: #606060 !important; }
.sb .a-down, .sb .a-right { margin: auto 0 0 auto; }
.events > .sb.h { padding-right: 18px; }
.events > .sb.h .thumb { width: 76%; }
.events .view-body .sb button, .events .view-body .thumb { width: 17px; height: 17px; background: #f0f0f0; border-color: #fff #696969 #696969 #fff; }
.events .view-body .sb { margin-bottom: -16px; z-index: 1; }
.transactions .sb .thumb { flex: 1; }

/* Folded docks */
.folded {
  flex: none;
  height: 36px;
  display: flex;
  padding: 10px 0 0 3px;
  gap: 3px;
  background: linear-gradient(#f0f0f0 1px, #fff 2px 3px, #f0f0f0 3px 6px, #a0a0a0 6px 7px, #696969 7px 8px, #f0f0f0 8px 10px, #e3e3e3 10px 11px, #c0c0c0 11px 12px, #f0f0f0 12px 14px, #e3e3e3 14px 15px, #f0f0f0 15px 21px, #a0a0a0 21px 22px, #696969 22px 23px, #f0f0f0 23px 25px, #c0c0c0 25px 26px, #a0a0a0 26px 27px, #696969 27px 28px, #fff 28px 30px, #f0f0f0 30px 33px, #a0a0a0 33px 34px, #696969 34px 35px, #f0f0f0 35px);
}
.folded-tab { width: 19px; height: 16px; background: #f0f0f0; border: solid #a0a0a0; border-width: 0 0 2px 1px; }
.folded-tab svg { display: block; width: 18px; height: 15px; }
.folded-line { flex: 1; height: 9px; border-bottom: 1px solid #696969; border-left: 1px solid #a0a0a0; background: linear-gradient(#fff, #fff) 60px 7px / 730px 2px no-repeat; }

/* LTSSM dock */
.dock {
  position: relative;
  flex: none;
  height: 381px;
  display: flex;
  padding: 4px 0 10px;
  border-left: 1px solid #696969;
  box-shadow: inset 0 3px #f0f0f0, inset 0 4px #696969, inset 0 -5px #f0f0f0, inset 0 -6px #696969;
  font-family: "Open Sans", sans-serif;
}
.side-tab {
  flex: none;
  width: 24px;
  height: 58px;
  margin-right: 4px;
  padding-right: 2px;
  border: solid #a0a0a0;
  border-width: 2px 1px 0 0;
  writing-mode: vertical-rl;
  transform: rotate(180deg);
  font: bold 15px/20px "Liberation Mono", monospace;
  text-align: right;
}
.timeline { flex: none; width: 302px; display: flex; flex-direction: column; border-left: 2px solid #696969; margin-right: 4px; }
.timeline-head { flex: none; height: 22px; display: flex; padding: 3px 0 3px 5px; border-bottom: 1px solid #c0c0c0; }
.timeline-head span { width: 137px; margin-right: -1px; border: 1px solid #000; background: linear-gradient(#f8f8f8, #d8d8d8); font: bold 12px/14px "Open Sans", sans-serif; text-align: center; }
.chev { width: 21px; height: 14px; margin-left: auto; }
.chev svg { display: block; width: 10px; height: 10px; margin: 2px 4px; fill: none; stroke: #555; }
.timeline-body { flex: 1; min-height: 0; display: flex; }
.lanes { flex: 1; min-width: 0; display: flex; gap: 2px; overflow: hidden; background: #fff; }
.lane { flex: none; }
.lane.states { width: 110px; }
.lane.speeds { width: 33px; }
.lane.late { padding-top: 10px; }
.st {
  height: 36px;
  display: flex;
  align-items: center;
  justify-content: center;
  border: 1px solid #000;
  border-radius: 7px;
  font-size: 12px;
  line-height: 15px;
  font-weight: bold;
  text-align: center;
}
.s56 { height: 56px; } .s92 { height: 92px; } .s108 { height: 108px; } .s128 { height: 128px; }
.s164 { height: 164px; } .s184 { height: 184px; } .s200 { height: 200px; } .s384 { height: 384px; }
.st.current { border: 4px solid #00f; }
.st.mate { border: 2px solid #f00; }
.l0 { background: radial-gradient(#f0fcf0, #90ee90 70%); }
.rcvr { background: radial-gradient(#fff6ee, #ffd8b8 70%); }
.detect { background: radial-gradient(#fef6e8, #f4bb44 70%); }
.polling { background: radial-gradient(#fcfae0, #eee680 70%); }
.config { background: radial-gradient(#f0fffe, #a6faf6 70%); }
.gen3 { background: linear-gradient(90deg, #88ee10, #fff); }
.gen1 { background: linear-gradient(90deg, #d6b0ff, #fff); }

/* Flat scroll bars */
.flat { flex: none; display: flex; background: #f0f0f0; }
.flat.v { width: 17px; flex-direction: column; }
.flat.h { height: 16px; padding-right: 17px; }
.flat svg { flex: none; width: 16px; height: 16px; fill: none; stroke: #999; stroke-width: 1.5; }
.flat.idle svg { stroke: #ccc; }
.flat i { background: #cdcdcd; }
.flat.h i { flex: 1; margin-right: 10px; }
.flat .short { height: 13px; }
.flat .long { height: 105px; }
.flat .last { margin-top: auto; }

/* Detail column */
.detail { flex: 1 1 0; min-width: 0; display: flex; flex-direction: column; margin-right: 5px; }
.pager { flex: none; height: 34px; display: flex; align-items: center; background: linear-gradient(#fdfdfd, #f0f0f0); font-size: 12px; }
.pager > button { width: 18px; height: 14px; display: flex; align-items: center; justify-content: center; }
.p-prev::after, .p-next::after { content: ""; border: 6px solid transparent; }
.p-prev::after { border-left: 0; border-right-color: #909090; }
.p-next::after { border-right: 0; border-left-color: #909090; }
.spin { display: flex; width: 93px; height: 28px; margin: 0 7px 0 1px; padding-bottom: 7px; border-top: 1px solid #696969; background: #fff; }
.spin input { width: 76px; padding: 0 2px; border: 0; background: #f0f0f0; color: #808080; font: 13px/18px "Open Sans", sans-serif; text-align: right; }
.spin span { display: flex; flex-direction: column; }
.spin span button { width: 17px; height: 10px; border: 1px solid #a0a0a0; background: #f0f0f0; color: #909090; font-size: 8px; line-height: 8px; }
.pager b { margin-right: 8px; }
.counts { flex: none; height: 138px; display: flex; flex-direction: column; border: 1px solid #a0a0a0; }
.counts-clip { flex: 1; min-height: 0; position: relative; overflow: hidden; background: #f0f0f0; }
.counts table { font-size: 12px; }
.counts th { height: 24px; padding: 0 4px; border-right: 1px solid #a0a0a0; border-bottom: 1px solid #a0a0a0; background: #f0f0f0; text-align: left; white-space: nowrap; overflow: hidden; }
.counts th:first-child { border-right-width: 2px; }
.counts th:last-child { border-right: 0; }
.counts td { height: 21px; padding: 0 4px; border-right: 1px solid #d0a868; border-bottom: 1px solid #d0a868; background: #fff5dc; text-align: center; line-height: 20px; white-space: nowrap; overflow: hidden; }
.counts .tree { padding: 0; border-bottom: 0; background: linear-gradient(90deg, #fff5dc, #fffdf6); border-right-color: transparent; }
.counts .tree + td:not(.tree) { text-align: left; border-left: 1px solid #d0a868; border-right: 2px solid #a0a0a0; }
.counts .tree svg { width: 10px; height: 10px; fill: none; stroke: #333; stroke-width: 1; }
.counts .alt td:not(.tree) { background: #eadfbe; }
.counts .red td { color: #f00; }
.counts .group td { background: #6d6d6d; }
.counts .group .tree { background: #fff5dc; }
.counts .group .tree + td { background: #fff; font-weight: bold; }
.counts-clip .sb { position: absolute; top: 24px; right: 0; bottom: 0; width: 18px; padding: 1px; }
.counts .sb.h .thumb { width: 73%; }
.counts .sb.h { padding: 0 18px 0 1px; }
.info-head {
  flex: none;
  height: 20px;
  margin-top: 5px;
  border: 1px solid #000;
  background: radial-gradient(#fff, #90ee90 70%);
  font-size: 12px;
  line-height: 18px;
}
.info { flex: 1; min-height: 0; display: flex; background: #fff; }
.info-main { flex: 1; }
.info h4 { height: 19px; color: #00f; font-size: 17px; line-height: 21px; text-align: center; }
.info dl { display: grid; grid-template-columns: repeat(4, 125px); font-size: 12px; line-height: 24px; }
.info dt { font-weight: bold; }
.info dd { white-space: nowrap; }
.info a { color: #0563c1; }

/* Diagram */
.diagram { position: relative; flex: 0 0 524px; display: flex; flex-direction: column; margin-right: 4px; }
.bar { flex: none; height: 20px; border: 1px solid #000; background: linear-gradient(#f8f8f8, #d0d0d0); font-size: 12px; font-weight: bold; line-height: 18px; text-align: center; }
.canvas { flex: 1; min-height: 0; display: flex; justify-content: space-between; background: #fff; overflow: hidden; }
.graph { width: 506px; height: 328px; flex: none; }
.edge { fill: none; stroke: #a9a9a9; stroke-width: 1.2; }
.edge path { marker-end: url(#ag); }
.edge.hit { stroke: #000; }
.edge.hit path { marker-end: url(#ab); }
.node { stroke: #000; }
.node.idle { stroke: #a9a9a9; }
.names { font: bold 8px "Open Sans", sans-serif; text-anchor: middle; }
.zoom, .foot { height: 18px; }
.zoom { display: flex; justify-content: flex-end; }
.zoom button { width: 20px; height: 16px; border: 1px solid #808080; background: #d0d0d0; }
.zoom button svg { display: block; width: 18px; height: 14px; }
.zoom input { appearance: none; width: 100px; height: 16px; margin: 0; background: linear-gradient(#d8e0e0, #d8e0e0) 8px 8px / 86px 3px no-repeat; }
.zoom input::-webkit-slider-thumb { appearance: none; width: 10px; height: 16px; background: #f0f0f0; border: 1px solid #b0b0b0; }
.diagram.next { flex: 0 0 8px; margin: 0; overflow: hidden; }
.diagram.next .bar { border-right: 0; }
.diagram.next .canvas { justify-content: flex-start; }

/* Red call-outs */
.mark { position: absolute; left: 40px; top: 6px; width: 311px; height: 338px; border: 2px solid #ed1c24; pointer-events: none; }
.mark.wide { left: 17px; top: -47px; width: 337px; height: 417px; }
```
FILE: script.js
```javascript
// [speed, icon, time, delta, port, protocol, down, up, summary, bytes, error]
// a cell that starts with "dllp|", "ts|" or "ei|" is drawn as a badge
const events = [
  ['8', 'Dp', '00:00.000_007_984_3', '7.9723', 'Down(1,1,1)', 'DLLP', 'UpdateFC-NP', '', 'HdrFC = 0x7F; DataFC = 0x200;', '8'],
  ['8', 'Dp', '00:00.000_008_016_6', '0.0322', 'Down(1,1,1)', 'DLLP', 'dllp|UpdateFC-P', '', 'HdrFC = 0x7F; DataFC = 0x300;', '8'],
  ['8', 'Dp', '00:00.000_017_722_5', '9.7058', 'Up(1,1,2)', 'DLLP', '', 'dllp|UpdateFC-NP', 'HdrFC = 0x53; DataFC = 0x030;', '8'],
  ['8', 'Dp', '00:00.000_017_738_4', '0.0159', 'Up(1,1,2)', 'DLLP', '', 'dllp|UpdateFC-P', 'HdrFC = 0x20; DataFC = 0x020;', '8'],
  ['', 'D', '00:03.999_575_534_5', '3999557.7961', 'Down(1,1,1)', '', '1 - PERST# Asserted (', '', '', '1'],
  ['8', 'os', '00:03.999_575_894_0', '0.3595', 'Down(1,1,1)', '', '1 - EIEOS', '', '', '16'],
  ['', 'Ei', '00:03.999_575_899_9', '0.0059', 'Up(1,1,2)', '', '', 'ei|525978817 - EI', '', '4'],
  ['8', 'os', '00:03.999_575_910_2', '0.0102', 'Down(1,1,1)', '', 'ts|1428370 - TS1', '', '16GT;', '16'],
  ['', 'Ei', '00:04.023_577_089_0', '24001.1788', 'Down(1,1,1)', '', 'ei|62452 - EI', '', '', '4'],
  ['2.5', 'os', '00:04.023_879_508_7', '302.4196', 'Down(1,1,1)', '', 'ts|373014 - TS1', '', '16GT;', '16'],
  ['', 'Ei', '00:04.047_831_879_9', '23952.3712', 'Down(1,1,1)', '', 'ei|757143 - EI', '', '', '4'],
  ['2.5', 'os', '00:04.059_950_865_1', '12118.9851', 'Down(1,1,1)', '', 'ts|532 - TS1', '', 'PAD; PAD; 16GT;', '16'],
  ['', 'Err', '00:04.059_985_218_1', '34.3530', 'Down(1,1,1)', '', '1167 - Loss of Sync', '', '', '8', true],
  ['2.5', 'os', '00:04.059_989_905_0', '4.6869', 'Down(1,1,1)', '', 'ts|373095 - TS1', '', 'PAD; PAD; 16GT;', '128'],
  ['', 'Ei', '00:06.008_134_321_8', '1948144.4167', 'Down(1,1,1)', '', 'ei|802890 - EI', '', '', '4'],
  ['2.5', 'Err', '00:06.020_982_052_7', '12847.7309', 'Down(1,1,1)', '', 'ts|1 - TS1', '', 'PAD; PAD; 16GT;', '48', true],
  ['', 'Err', '00:06.020_982_058_1', '0.0054', 'Down(1,1,1)', '', '815 - Loss of Sync', '', '', '8', true],
  ['2.5', 'os', '00:06.020_985_337_8', '3.2796', 'Down(1,1,1)', '', 'ts|373703 - TS1', '', 'PAD; PAD; 16GT;', '128'],
  ['2.5', 'Err', '00:06.044_981_453_3', '23996.1154', 'Down(1,1,1)', '', '1 - Unknown', '', '', '8', true],
  ['', 'D', '00:06.113_873_532_7', '68892.0794', 'Down(1,1,1)', '', '1 - PERST# Deasserted', '', '', '1']
];

function cell(text) {
  const parts = text.split('|');
  return parts.length > 1 ? `<span class="badge ${parts[0]}">${parts[1]}</span>` : text;
}

function eventRow(e, index) {
  const rowClass = index === 0 ? 'selected' : e[10] ? 'error' : '';
  const speed = `<b class="${e[0] === '8' ? 'g8' : ''}">${e[0]}</b>`;
  return `<tr class="${rowClass}">
    <td class="icons">${speed}<i class="${e[1]}">${e[1]}</i></td><td></td>
    <td class="end"><span>${e[2]}</span></td>
    <td class="end"><span>${e[3]}</span></td>
    <td class="end port ${e[4].startsWith('Up') ? 'up' : ''}"><span>${e[4]}</span></td>
    <td>${e[5]}</td><td>${cell(e[6])}</td><td>${cell(e[7])}</td><td>${e[8]}</td>
    <td class="end"><span>${e[9]}</span></td><td></td><td></td><td></td>
  </tr>`;
}

function transactionRow(index) {
  const kind = index === 15 || index === 17 ? 'wr|CfgWr0' : 'rd|CfgRd0';
  const down = index === 0 ? 'CfgRd0' : cell(kind);
  return `<tr class="${index === 0 ? 'selected' : ''}"><td class="blank"></td><td><i class="plus"></i></td><td>${down}</td><td>Good</td></tr>`;
}

document.getElementById('event-rows').innerHTML =
  '<tr><td class="icons"><span class="beg-tag">Beg</span></td><td></td><td>&nbsp; 00:00.000_000_0...</td>' + '<td></td>'.repeat(10) + '</tr>' +
  events.map(eventRow).join('');

document.getElementById('transaction-rows').innerHTML =
  '<tr><td class="beg">Beg</td><td></td><td></td><td></td></tr>' +
  events.map((e, index) => transactionRow(index)).join('');
```
